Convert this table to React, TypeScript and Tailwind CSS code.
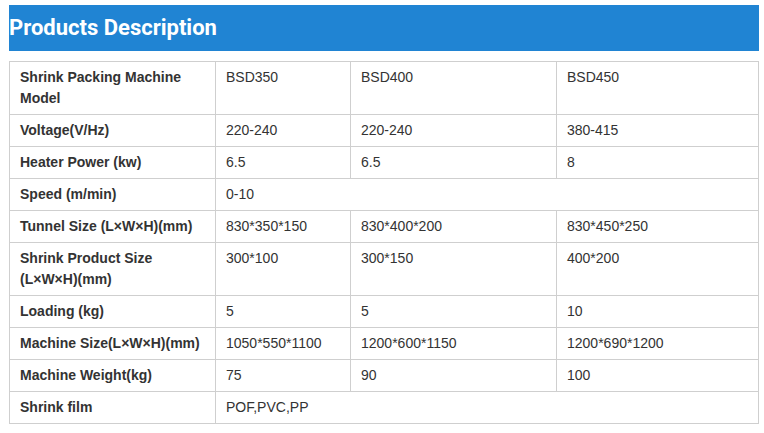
const rows: { label: string[]; values: string[] }[] = [
  { label: ["Shrink Packing Machine", "Model"], values: ["BSD350", "BSD400", "BSD450"] },
  { label: ["Voltage(V/Hz)"], values: ["220-240", "220-240", "380-415"] },
  { label: ["Heater Power (kw)"], values: ["6.5", "6.5", "8"] },
  { label: ["Speed (m/min)"], values: ["0-10"] },
  { label: ["Tunnel Size (L×W×H)(mm)"], values: ["830*350*150", "830*400*200", "830*450*250"] },
  { label: ["Shrink Product Size", "(L×W×H)(mm)"], values: ["300*100", "300*150", "400*200"] },
  { label: ["Loading (kg)"], values: ["5", "5", "10"] },
  { label: ["Machine Size(L×W×H)(mm)"], values: ["1050*550*1100", "1200*600*1150", "1200*690*1200"] },
  { label: ["Machine Weight(kg)"], values: ["75", "90", "100"] },
  { label: ["Shrink film"], values: ["POF,PVC,PP"] },
]

export default function App() {
  return (
    <div className="min-h-screen bg-white pt-[5px] pl-[9px] font-['Liberation_Sans',Arial,sans-serif]">
      <div className="w-[750px]">
        <h2 className="flex h-[46px] items-center bg-[#2084d3] pb-[1px] font-['Roboto',sans-serif] text-[22px] font-bold text-white">
          Products Description
        </h2>
        <table className="mt-[10px] w-[750px] table-fixed border-collapse text-[14px] leading-[21px] text-[#333]">
          <colgroup>
            <col className="w-[206px]" />
            <col className="w-[135px]" />
            <col className="w-[206px]" />
            <col />
          </colgroup>
          <tbody>
            {rows.map((r, i) => (
              <tr key={i}>
                <td className="border border-[#cfcfcf] px-[10px] pt-[5px] pb-[5px] align-top font-bold">
                  {r.label.map((l, j) => (
                    <div key={j}>{l}</div>
                  ))}
                </td>
                {r.values.length === 1 ? (
                  <td colSpan={3} className="border border-[#cfcfcf] px-[10px] pt-[5px] pb-[5px] align-top">
                    {r.values[0]}
                  </td>
                ) : (
                  r.values.map((v, j) => (
                    <td key={j} className="border border-[#cfcfcf] px-[10px] pt-[5px] pb-[5px] align-top">
                      {v}
                    </td>
                  ))
                )}
              </tr>
            ))}
          </tbody>
        </table>
      </div>
    </div>
  )
}
